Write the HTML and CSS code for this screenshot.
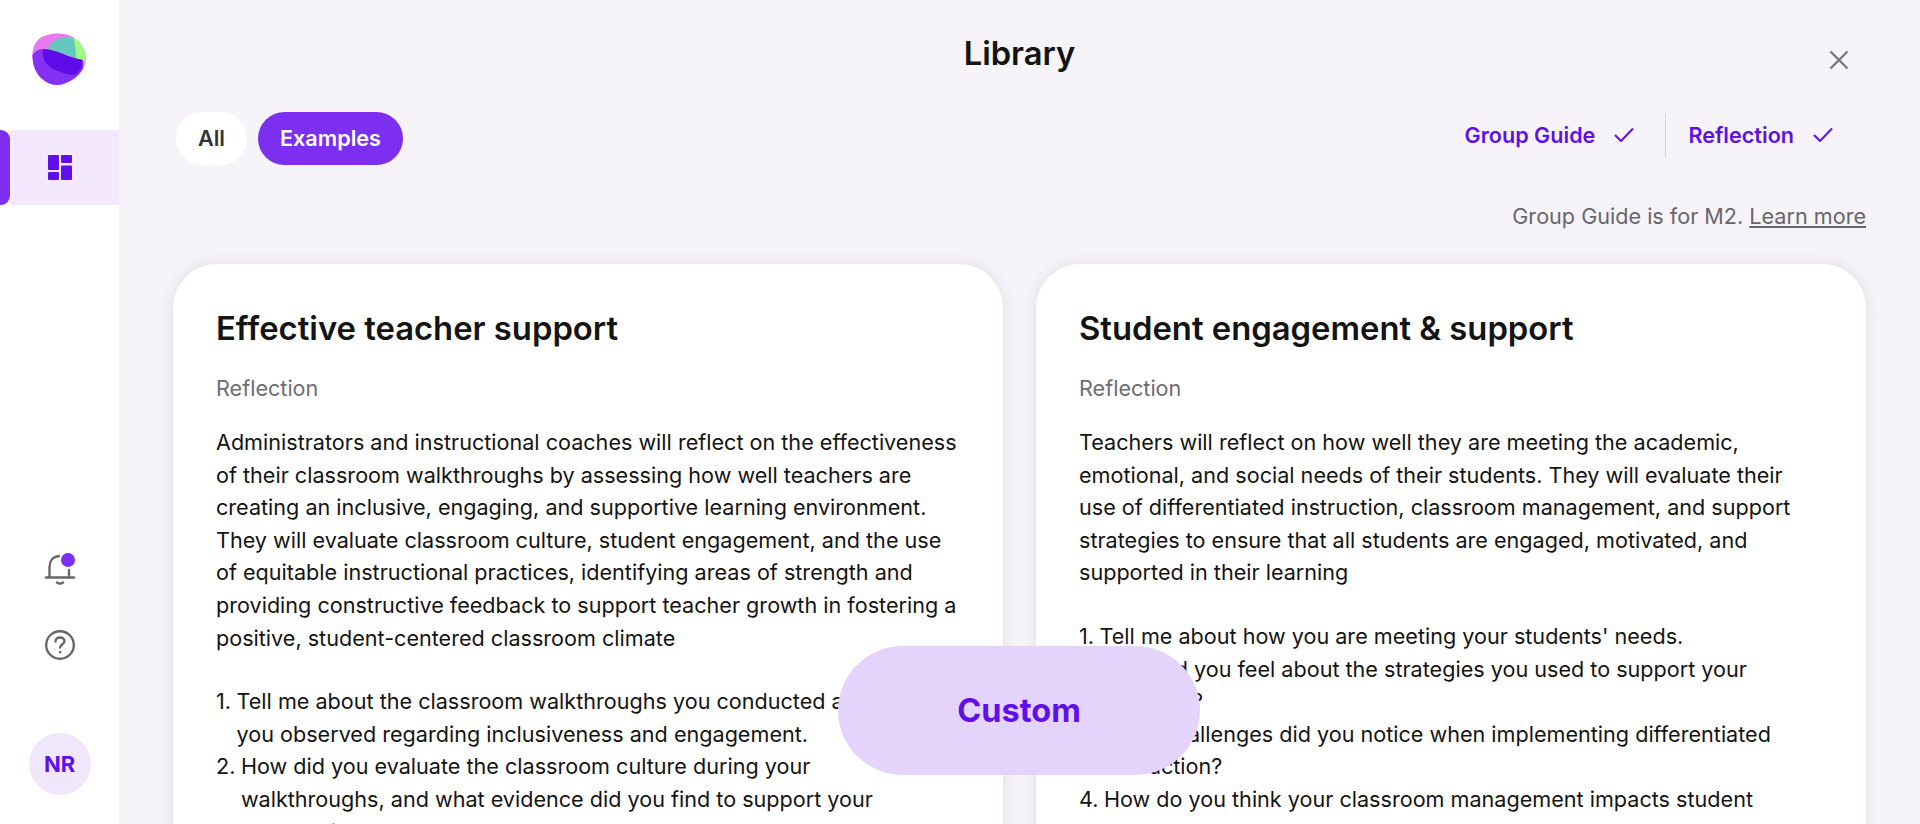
FILE: index.html
```html
<!DOCTYPE html>
<html lang="en">
<head>
<meta charset="utf-8">
<title>Library</title>
<link rel="stylesheet" href="styles.css">
</head>
<body>
<div class="app">
  <aside class="sidebar">
    <div class="logo">
      <svg width="56" height="54" viewBox="0 0 56 54">
        <defs><clipPath id="ball"><path d="M26 .5C36 0 44 4 49 10C53 15 55 20 55 25C55 33 50 40 44 45C38 49 32 52 26 52C20 52 14 49 9 44C4 38 2 32 1.500 24C1 16 4 9 9 5C14 2 20 .5 26 .5Z"/></clipPath></defs>
        <g clip-path="url(#ball)">
          <rect width="56" height="54" fill="#e87af0"/>
          <path d="M42 2L58 10V30L44 26Z" fill="#9dfb82"/>
          <path d="M17 16C19 10 24 6 30 5C34 4 39 4 42 4C44 10 45 17 45 25Z" fill="#63c8bd"/>
          <path d="M0 24C2 20 7 16 12 16C18 16 25 18 32 21C38 24 45 25 52 27V54H0Z" fill="#8431f3"/>
          <path d="M12 16.500C18 16 25 18 32 21C38 24 45 25 51 27C51 31 51 34 49 37C47 40 45 41 43 42C38 42 34 41 30 39C25 37 20 36 17 32C13 28 11 22 12 16.500Z" fill="#5d0ce8"/>
        </g>
      </svg>
    </div>
    <nav class="nav-active">
      <span class="nav-bar"></span>
      <span class="nav-tile">
        <svg width="24" height="25" viewBox="0 0 24 25" fill="#5f10ea">
          <rect width="11" height="15" rx="1"/><rect x="13" width="11" height="8" rx="1"/><rect y="17" width="11" height="8" rx="1"/><rect x="13" y="10.500" width="11" height="14.500" rx="1"/>
        </svg>
      </span>
    </nav>
    <div class="side-bottom">
      <span class="bell">
        <svg width="32" height="32" viewBox="0 0 32 32" fill="none" stroke="#68666c" stroke-width="2.400" stroke-linecap="round">
          <path d="M5.500 24V14C5.500 8 9 3.500 15 3"/><path d="M25 17V24"/><path d="M2 24.500H30"/><path d="M13 29.500C15 31 17 31 19 29.500"/>
        </svg>
        <span class="bell-dot"></span>
      </span>
      <svg class="help" width="32" height="32" viewBox="0 0 32 32" fill="none" stroke="#68666c" stroke-width="2.400" stroke-linecap="round">
        <circle cx="16" cy="16" r="13.800"/><path d="M11.500 12.500C11.500 9.800 13.500 8.500 16 8.500C18.500 8.500 20.500 10 20.500 12.300C20.500 15.300 16.200 15.300 16.200 18.500"/><path d="M16.200 23V23.200"/>
      </svg>
      <div class="avatar">NR</div>
    </div>
  </aside>
  <main class="main">
    <h1 class="title">Library</h1>
    <button class="close" aria-label="Close">
      <svg width="20" height="20" viewBox="0 0 20 20" fill="none" stroke="#7a787e" stroke-width="2.400"><path d="M1.500 1.500L18.500 18.500M18.500 1.500L1.500 18.500"/></svg>
    </button>
    <div class="toolbar">
      <div class="tabs">
        <span class="tab tab-all">All</span>
        <span class="tab tab-on">Examples</span>
      </div>
      <div class="filters">
        <span class="filter">Group Guide
          <svg width="20" height="15" viewBox="0 0 20 15" fill="none" stroke="#5f10ea" stroke-width="2"><path d="M1 8L7 14L19 1.500"/></svg>
        </span>
        <span class="filter-rule"></span>
        <span class="filter">Reflection
          <svg width="20" height="15" viewBox="0 0 20 15" fill="none" stroke="#5f10ea" stroke-width="2"><path d="M1 8L7 14L19 1.500"/></svg>
        </span>
      </div>
    </div>
    <p class="note">Group Guide is for M2. <a class="note-link">Learn more</a></p>
    <div class="cards">
      <article class="card">
        <h2 class="card-title">Effective teacher support</h2>
        <p class="card-type">Reflection</p>
        <p class="card-text">Administrators and instructional coaches will reflect on the effectiveness of their classroom walkthroughs by assessing how well teachers are creating an inclusive, engaging, and supportive learning environment. They will evaluate classroom culture, student engagement, and the use of equitable instructional practices, identifying areas of strength and providing constructive feedback to support teacher growth in fostering a positive, student-centered classroom climate</p>
        <ol class="card-list">
          <li class="item"><span>1.</span><span>Tell me about the classroom walkthroughs you conducted and what you observed regarding inclusiveness and engagement.</span></li>
          <li class="item"><span>2.</span><span>How did you evaluate the classroom culture during your walkthroughs, and what evidence did you find to support your observations?</span></li>
        </ol>
      </article>
      <article class="card">
        <h2 class="card-title">Student engagement &amp; support</h2>
        <p class="card-type">Reflection</p>
        <p class="card-text">Teachers will reflect on how well they are meeting the academic, emotional, and social needs of their students. They will evaluate their use of differentiated instruction, classroom management, and support strategies to ensure that all students are engaged, motivated, and supported in their learning</p>
        <ol class="card-list">
          <li class="item"><span>1.</span><span>Tell me about how you are meeting your students' needs.</span></li>
          <li class="item"><span>2.</span><span>How did you feel about the strategies you used to support your students?</span></li>
          <li class="item"><span>3.</span><span>What challenges did you notice when implementing differentiated instruction?</span></li>
          <li class="item"><span>4.</span><span>How do you think your classroom management impacts student engagement?</span></li>
        </ol>
      </article>
    </div>
    <button class="custom">Custom</button>
  </main>
</div>
</body>
</html>
```
FILE: styles.css
```css
* { box-sizing: border-box; }
html, body { margin: 0; height: 100%; overflow: hidden; }
body { font-family: Inter, "Liberation Sans", sans-serif; color: #141414; background: #f6f4f8; }
.app { display: flex; height: 824px; overflow: hidden; }
.sidebar { width: 119px; flex: none; background: #fff; display: flex; flex-direction: column; }
.logo { height: 130px; padding: 33px 0 0 31px; }
.nav-active { display: flex; height: 75px; }
.nav-bar { width: 10px; background: #7c2ff0; border-radius: 0 9px 9px 0; }
.nav-tile { flex: 1; background: #f3e8ff; display: flex; align-items: center; justify-content: center; padding-right: 10px; }
.side-bottom { margin-top: auto; display: flex; flex-direction: column; align-items: center; padding-bottom: 29px; }
.bell { position: relative; display: block; width: 32px; height: 32px; }
.bell svg { display: block; }
.bell-dot { position: absolute; top: 0; right: 1px; width: 14px; height: 14px; border-radius: 50%; background: #7c2ff0; }
.help { margin-top: 44px; }
.avatar { margin-top: 72px; width: 62px; height: 62px; border-radius: 50%; background: #f1e7fd; color: #5f10ea; font-weight: 700; font-size: 22px; display: flex; align-items: center; justify-content: center; }
.main { flex: 1; position: relative; padding: 0 54px; min-width: 0; }
.title { margin: 0; text-align: center; font-size: 32.700px; font-weight: 600; line-height: 40px; padding-top: 33px; }
.close { position: absolute; top: 50px; right: 71px; padding: 0; border: 0; background: none; display: block; line-height: 0; }
.toolbar { display: flex; justify-content: space-between; align-items: center; margin-top: 38px; height: 54px; }
.tabs { display: flex; gap: 11px; margin-left: 3px; }
.tab { height: 53px; border-radius: 27px; display: flex; align-items: center; font-size: 21.600px; font-weight: 600; padding: 0 22px; }
.tab-all { background: #fff; color: #333; }
.tab-on { background: #7c2ff0; color: #fff; }
.filters { display: flex; align-items: center; padding: 0 33px 7px 0; }
.filter { display: flex; align-items: center; gap: 19px; color: #5f10ea; font-size: 21.600px; font-weight: 600; }
.filter-rule { width: 1px; height: 44px; background: #d5d3d8; margin: 0 22px 0 31px; }
.note { margin: 37px 0 0; text-align: right; font-size: 21.600px; line-height: 28px; color: #68666c; }
.note-link { text-decoration: underline; }
.cards { display: grid; grid-template-columns: 830px 830px; gap: 33px; margin-top: 34px; }
.card { background: #fff; border-radius: 44px 44px 0 0; height: 600px; padding: 44px 43px 0; box-shadow: 0 0 14px rgba(60,40,90,.12); }
.card-title { margin: 0; font-size: 32.800px; line-height: 40px; font-weight: 600; }
.card-type { margin: 24px 0 0; font-size: 21.600px; line-height: 32px; color: #6e6c72; }
.card-text { margin: 22px 0 0; font-size: 21.600px; line-height: 32.600px; }
.card-list { margin: 31px 0 0; padding: 0 15px 0 0; list-style: none; font-size: 21.600px; line-height: 32.600px; }
.item { display: flex; gap: 5.500px; }
.custom { position: absolute; left: 719px; bottom: 49px; width: 362px; height: 129px; border: 0; border-radius: 65px; background: #e4d4fb; color: #5f10ea; font: 700 32.500px Inter, "Liberation Sans", sans-serif; }
```
